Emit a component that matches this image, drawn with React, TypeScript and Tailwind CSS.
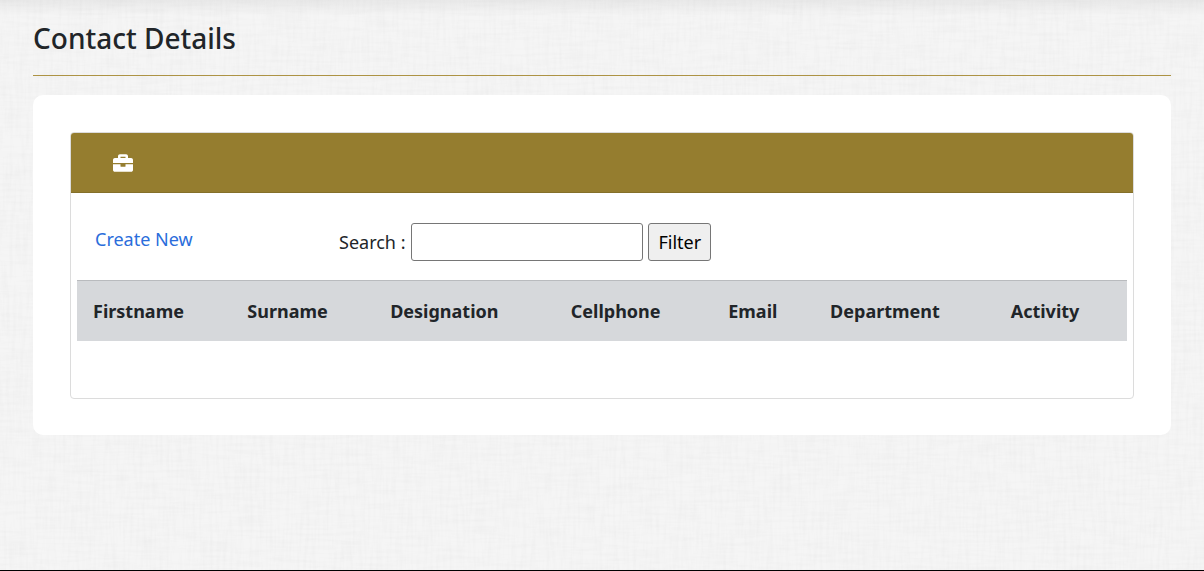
import { FaBriefcase } from "react-icons/fa";

const columns = [
  { name: "Firstname", width: "w-[14.7%]" },
  { name: "Surname", width: "w-[13.6%]" },
  { name: "Designation", width: "w-[17.2%]" },
  { name: "Cellphone", width: "w-[15%]" },
  { name: "Email", width: "w-[9.7%]" },
  { name: "Department", width: "w-[17.2%]" },
  { name: "Activity", width: "w-[12.6%]" },
];

function LinenTexture() {
  return (
    <svg className="absolute inset-0 -z-10 h-full w-full" aria-hidden="true">
      <filter id="weft" x="0" y="0" width="100%" height="100%">
        <feTurbulence type="fractalNoise" baseFrequency="0.03 0.3" numOctaves="2" seed="4" />
        <feColorMatrix values="0 0 0 0 0  0 0 0 0 0  0 0 0 0 0  0.3 0 0 0 -0.1" />
      </filter>
      <filter id="warp" x="0" y="0" width="100%" height="100%">
        <feTurbulence type="fractalNoise" baseFrequency="0.3 0.03" numOctaves="2" seed="9" />
        <feColorMatrix values="0 0 0 0 0  0 0 0 0 0  0 0 0 0 0  0.3 0 0 0 -0.1" />
      </filter>
      <rect width="100%" height="100%" filter="url(#weft)" opacity="0.1" />
      <rect width="100%" height="100%" filter="url(#warp)" opacity="0.1" />
    </svg>
  );
}

export default function App() {
  return (
    <div className="relative isolate min-h-screen border-b border-black bg-[#f5f5f5] px-[33px] font-['Noto_Sans',sans-serif] text-lg text-[#212529]">
      <LinenTexture />
      <div className="absolute inset-x-0 top-0 -z-10 h-4 bg-linear-to-b from-black/5 to-transparent" />
      <header className="border-b border-[#ad9344] pt-5 pb-[19px]">
        <h1 className="text-[28px] leading-9 font-medium">Contact Details</h1>
      </header>
      <main className="mt-[19px] rounded-[10px] bg-white px-[37px] pt-[37px] pb-9">
        <section className="overflow-hidden rounded border border-[#dcdcdc]">
          <div className="flex h-[60px] items-center border-b border-[#84702a] bg-[#957d2f] pl-[42px] text-white">
            <FaBriefcase className="size-5" aria-hidden="true" />
          </div>
          <div className="px-[6px] pt-[30px] pb-[57px]">
            <div className="flex items-start pl-[18px]">
              <a href="#create" className="mt-[2px] w-[244px] leading-7 text-[#2a6ddb]">
                Create New
              </a>
              <form className="flex items-center" onSubmit={(e) => e.preventDefault()}>
                <label htmlFor="search">Search :</label>
                <input
                  id="search"
                  type="text"
                  className="ml-[6px] h-[38px] w-[232px] rounded-[3px] border border-[#767676] bg-white px-1"
                />
                <button
                  type="submit"
                  className="ml-[5px] h-[38px] rounded-[3px] border border-[#767676] bg-[#efefef] px-[9px] text-black"
                >
                  Filter
                </button>
              </form>
            </div>
            <table className="mt-[19px] w-full table-fixed border-collapse">
              <thead>
                <tr className="border-t border-[#b9bbbe] bg-[#d6d8db]">
                  {columns.map((column) => (
                    <th
                      key={column.name}
                      scope="col"
                      className={`h-[60px] px-4 text-left font-bold ${column.width}`}
                    >
                      {column.name}
                    </th>
                  ))}
                </tr>
              </thead>
            </table>
          </div>
        </section>
      </main>
    </div>
  );
}
